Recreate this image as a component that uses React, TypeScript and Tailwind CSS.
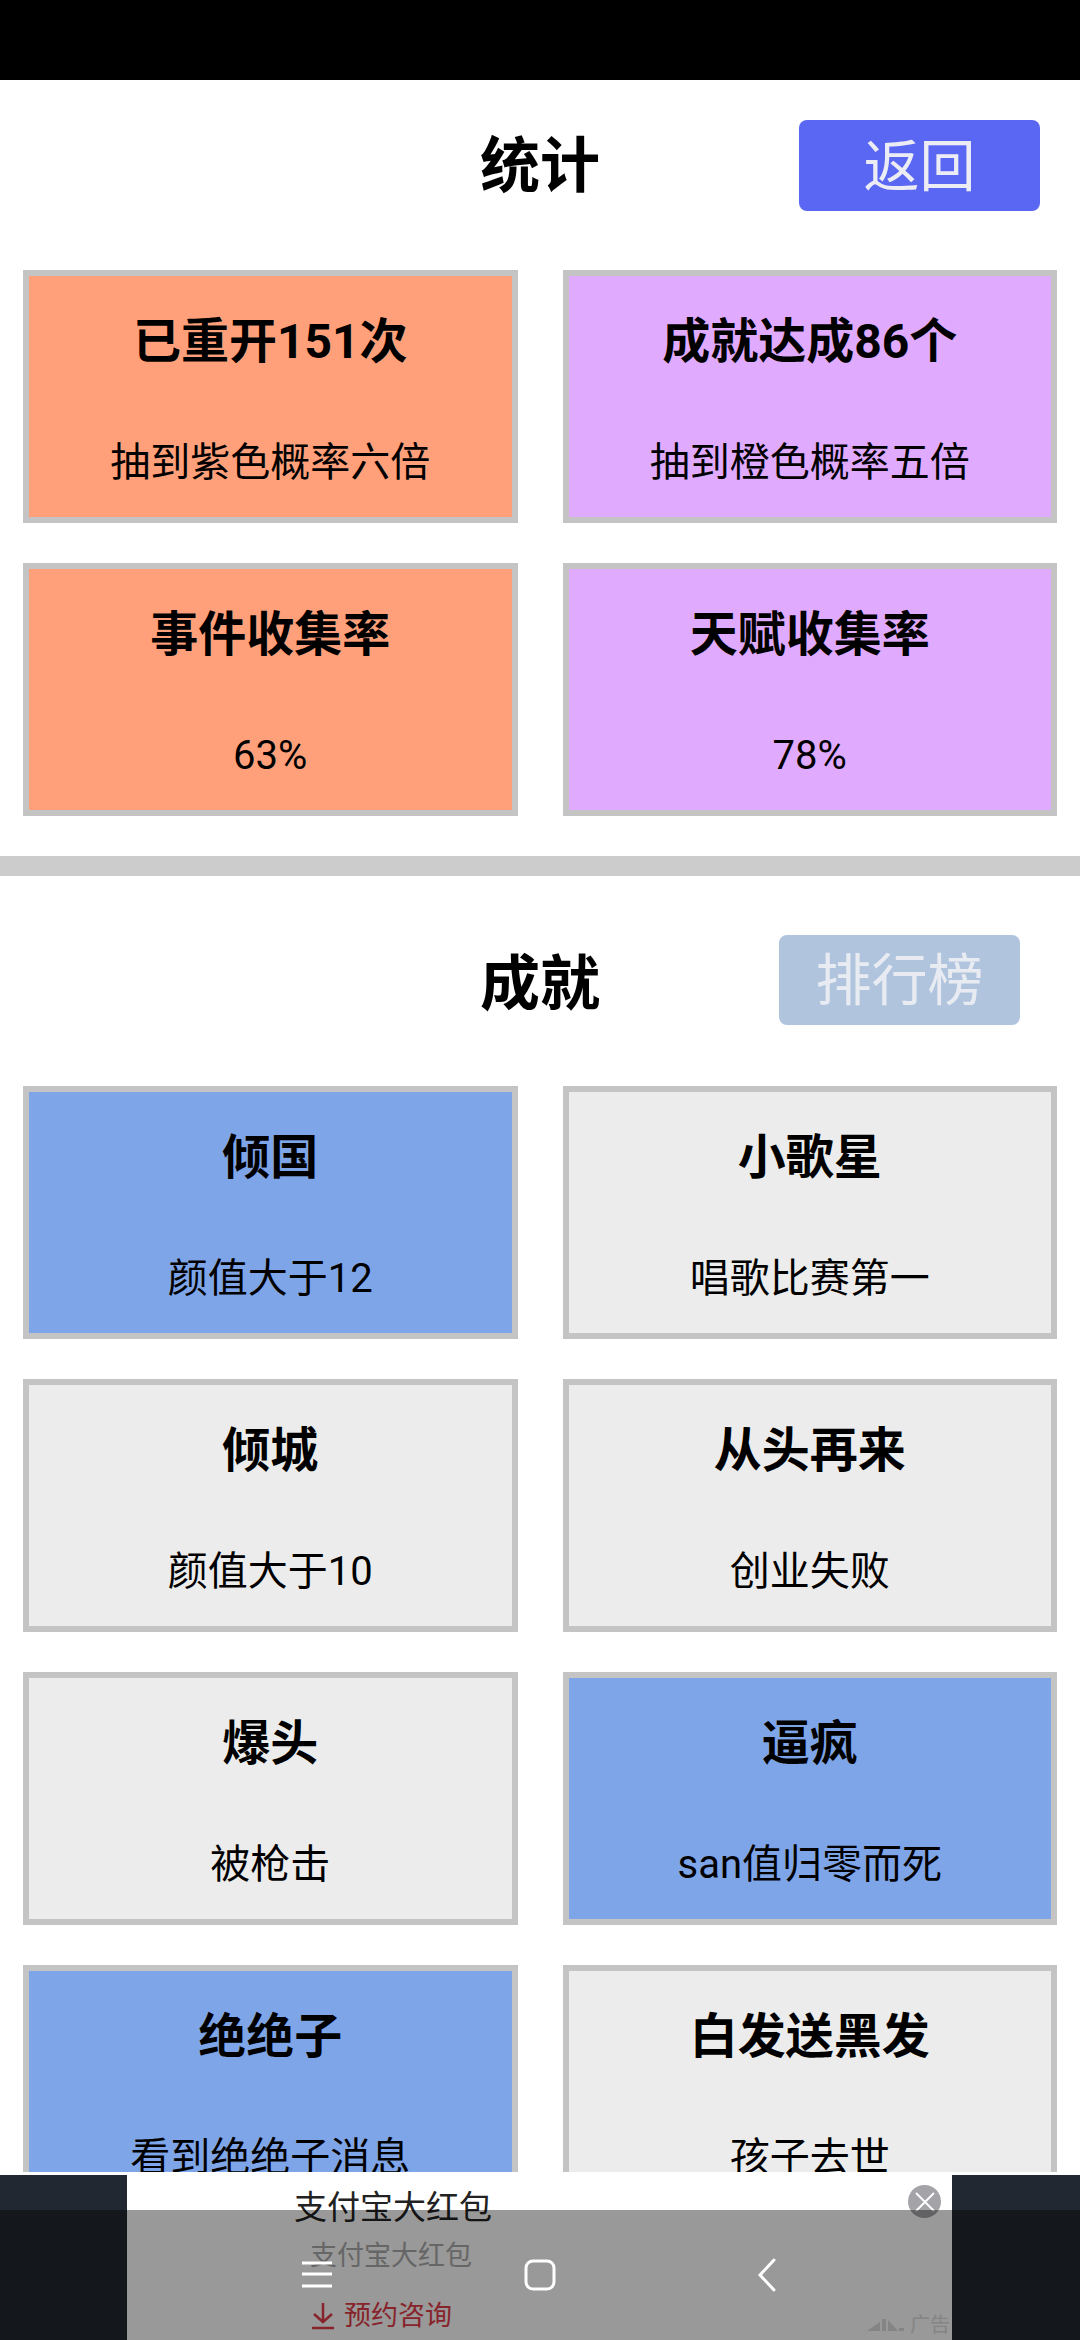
const cardStats = [
  { title: '已重开151次', desc: '抽到紫色概率六倍', bg: 'bg-[#ffa07a]' },
  { title: '成就达成86个', desc: '抽到橙色概率五倍', bg: 'bg-[#e0aaff]' },
  { title: '事件收集率', desc: '63%', bg: 'bg-[#ffa07a]' },
  { title: '天赋收集率', desc: '78%', bg: 'bg-[#e0aaff]' },
];

const achievements = [
  { title: '倾国', desc: '颜值大于12', done: true },
  { title: '小歌星', desc: '唱歌比赛第一', done: false },
  { title: '倾城', desc: '颜值大于10', done: false },
  { title: '从头再来', desc: '创业失败', done: false },
  { title: '爆头', desc: '被枪击', done: false },
  { title: '逼疯', desc: 'san值归零而死', done: true },
  { title: '绝绝子', desc: '看到绝绝子消息', done: true },
  { title: '白发送黑发', desc: '孩子去世', done: false },
];

function Card({ title, desc, bg }: { title: string; desc: string; bg: string }) {
  return (
    <div className={`h-[253px] border-[6px] border-[#c4c4c4] flex flex-col items-center ${bg}`}>
      <h3 className="mt-[30px] text-[48px] leading-[72px] font-bold text-black">{title}</h3>
      <p className="mt-[55px] text-[40px] leading-[60px] text-black">{desc}</p>
    </div>
  );
}

export default function App() {
  return (
    <div
      className="relative w-[1080px] h-[2340px] overflow-hidden bg-white"
      style={{ fontFamily: 'Roboto, "Noto Sans CJK SC", sans-serif' }}
    >
      <div className="h-20 bg-black" />

      {/* 统计 */}
      <div className="grid grid-cols-[1fr_auto_1fr] items-start pt-10 h-[190px]">
        <div />
        <h2 className="pt-[2px] text-[60px] leading-[90px] font-bold text-black">统计</h2>
        <button className="justify-self-end mr-[40px] w-[241px] h-[91px] pt-[2px] rounded-lg bg-[#5a67f2] text-[56px] text-[#ececf5]">
          返回
        </button>
      </div>
      <div className="grid grid-cols-2 gap-x-[45px] gap-y-10 px-[23px] pb-10">
        {cardStats.map(s => (
          <Card key={s.title} {...s} />
        ))}
      </div>

      <div className="h-5 bg-[#cccccc]" />

      {/* 成就 */}
      <div className="grid grid-cols-[1fr_auto_1fr] items-start pt-[59px] h-[210px]">
        <div />
        <h2 className="pt-[5px] text-[60px] leading-[90px] font-bold text-black">成就</h2>
        <button className="justify-self-end mr-[60px] w-[241px] h-[90px] pt-[2px] rounded-lg bg-[#b0c4de] text-[56px] text-[#e8ecf2]">
          排行榜
        </button>
      </div>
      <div className="grid grid-cols-2 gap-x-[45px] gap-y-10 px-[23px]">
        {achievements.map(a => (
          <Card key={a.title} title={a.title} desc={a.desc} bg={a.done ? 'bg-[#7fa5e9]' : 'bg-[#ececec]'} />
        ))}
      </div>

      {/* Ad banner */}
      <div className="absolute inset-x-0 bottom-0 h-[168px] bg-white flex">
        <div className="w-[127px] mt-[3px] bg-[#222831]" />
        <div className="relative flex-1 overflow-hidden">
          <p className="mt-[11px] ml-[167px] text-[33px] leading-[50px] text-[#222222]">支付宝大红包</p>
          <p className="mt-[1px] ml-[183px] text-[27px] leading-[44px] text-[#aaaaaa]">支付宝大红包</p>
          <div className="mt-[18px] ml-[184px] flex items-center gap-[9px] text-[27px] leading-[40px] text-[#e23c48]">
            <svg width="24" height="28" viewBox="0 0 24 28" fill="none" stroke="currentColor" strokeWidth="2.5">
              <path d="M12 1V20M3 12L12 20L21 12M1 26H23" />
            </svg>
            <span>预约咨询</span>
          </div>
          <div className="absolute right-[2px] bottom-0 flex items-center gap-[5px] text-[20px] leading-[30px] text-[#dddddd]">
            <svg width="38" height="14" viewBox="0 0 38 14" fill="currentColor">
              <path d="M0 13L13 4V13ZM15 1H19V13H15ZM21 2L31 13H21ZM32 10H37V13H32Z" />
            </svg>
            <span>广告</span>
          </div>
          <div className="absolute right-[11px] top-[13px] w-[33px] h-[33px] rounded-full bg-[#a3a3a8] flex items-center justify-center">
            <svg width="22" height="22" viewBox="0 0 22 22" fill="none" stroke="#ffffff" strokeWidth="2">
              <path d="M2 2L20 20M20 2L2 20" />
            </svg>
          </div>
        </div>
        <div className="w-[128px] mt-[3px] bg-[#222831]" />
      </div>

      {/* System nav bar */}
      <div className="absolute inset-x-0 bottom-0 h-[130px] bg-black/40">
        <svg className="absolute left-[302px] top-[50px]" width="30" height="30" viewBox="0 0 30 30" stroke="#ffffff" strokeWidth="3">
          <path d="M0 3H30M0 14H30M0 26H30" />
        </svg>
        <svg className="absolute left-[524px] top-[49px]" width="32" height="32" viewBox="0 0 32 32" fill="none" stroke="#ffffff" strokeWidth="3">
          <rect x="2" y="2" width="28" height="28" rx="7" />
        </svg>
        <svg className="absolute left-[757px] top-[48px]" width="20" height="34" viewBox="0 0 20 34" fill="none" stroke="#ffffff" strokeWidth="3" strokeLinecap="round">
          <path d="M17 2L3 17L17 32" />
        </svg>
      </div>
    </div>
  );
}
